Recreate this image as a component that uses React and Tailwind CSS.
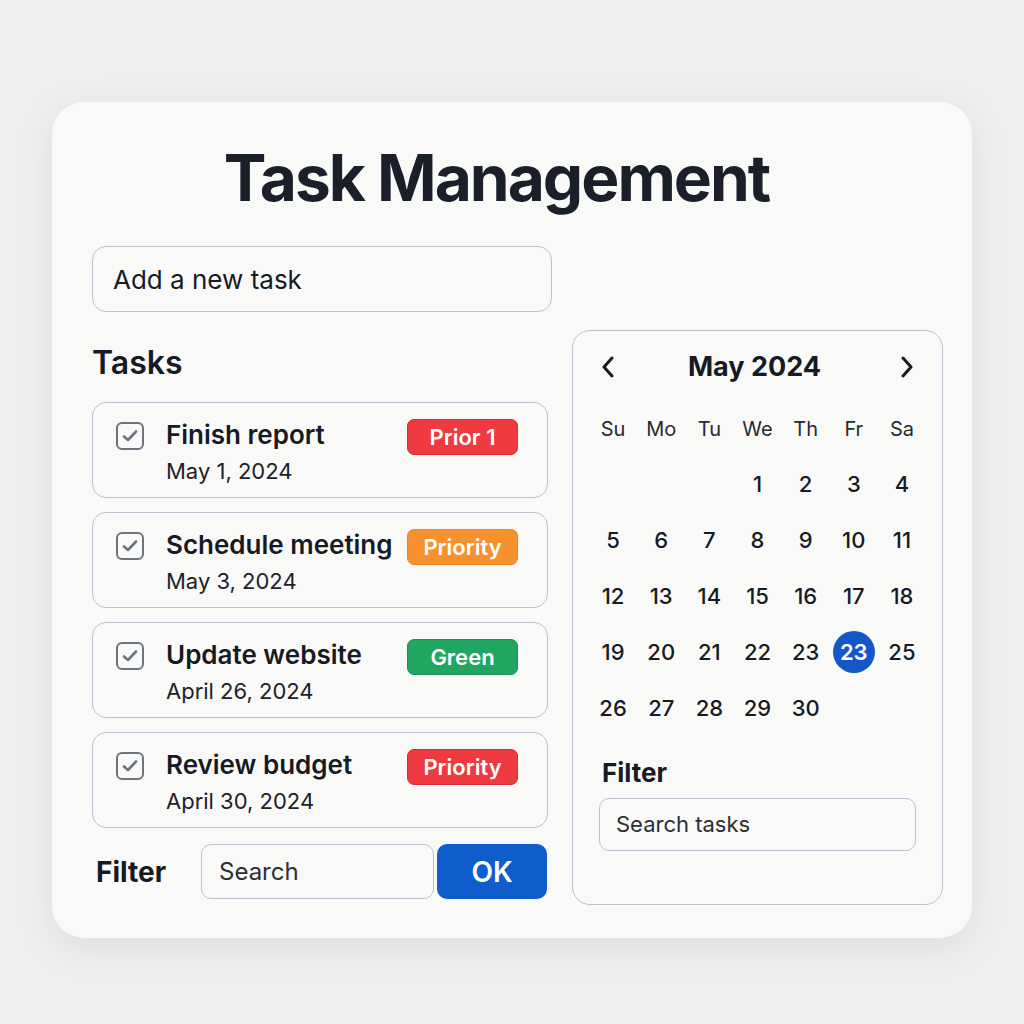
const TASKS = [
  { title: 'Finish report', date: 'May 1, 2024', badge: 'Prior 1', color: 'bg-[#ee3a40] border-[#e02a31]' },
  { title: 'Schedule meeting', date: 'May 3, 2024', badge: 'Priority', color: 'bg-[#f6912e] border-[#ec8420]' },
  { title: 'Update website', date: 'April 26, 2024', badge: 'Green', color: 'bg-[#21a662] border-[#179455]' },
  { title: 'Review budget', date: 'April 30, 2024', badge: 'Priority', color: 'bg-[#ee3a40] border-[#e02a31]' },
]

const DAYS = ['Su', 'Mo', 'Tu', 'We', 'Th', 'Fr', 'Sa']

// the reference repeats 23 on the Friday, keep it as shown
const WEEKS = [
  ['', '', '', '1', '2', '3', '4'],
  ['5', '6', '7', '8', '9', '10', '11'],
  ['12', '13', '14', '15', '16', '17', '18'],
  ['19', '20', '21', '22', '23', '23*', '25'],
  ['26', '27', '28', '29', '30', '', ''],
]

function Check() {
  return (
    <div className="mt-[3px] w-[28px] h-[28px] shrink-0 rounded-[6px] border-2 border-[#6e7480] flex items-center justify-center">
      <svg width="16" height="14" viewBox="0 0 16 14" fill="none">
        <path d="M2 7.5 6 11 14 2.5" stroke="#6e7480" strokeWidth="2.6" strokeLinecap="round" strokeLinejoin="round" />
      </svg>
    </div>
  )
}

function TaskCard({ task }) {
  return (
    <div className="h-[96px] rounded-[14px] border-[1.5px] border-[#bac2ce] pl-[23px] pr-[29px] pt-[16px] flex items-start">
      <Check />
      <div className="ml-[22px] flex-1 min-w-0">
        <div className="text-[26px] leading-[32px] font-semibold text-[#151a24] whitespace-nowrap">{task.title}</div>
        <div className="mt-[6px] text-[22px] leading-[28px] text-[#1d2129]">{task.date}</div>
      </div>
      <div className={`w-[111px] h-[36px] shrink-0 rounded-[7px] border ${task.color} text-white text-[22px] font-semibold flex items-center justify-center`}>
        {task.badge}
      </div>
    </div>
  )
}

function Chevron({ dir }) {
  return (
    <svg width="14" height="22" viewBox="0 0 14 22" fill="none">
      <path
        d={dir === 'left' ? 'M11 2 3 11l8 9' : 'M3 2l8 9-8 9'}
        stroke="#151a24"
        strokeWidth="3"
        strokeLinecap="round"
        strokeLinejoin="round"
      />
    </svg>
  )
}

function Calendar() {
  return (
    <div className="w-[371px] h-[575px] rounded-[18px] border-[1.5px] border-[#bac2ce] px-[16px] pt-[18px]">
      <div className="h-[36px] flex items-center justify-between px-[12px]">
        <Chevron dir="left" />
        <div className="text-[27px] leading-[36px] font-bold text-[#151a24] pr-[6px]">May 2024</div>
        <Chevron dir="right" />
      </div>
      <div className="mt-[29px] grid grid-cols-7 h-[30px] items-center">
        {DAYS.map(d => (
          <div key={d} className="text-center text-[20px] text-[#262a31]">{d}</div>
        ))}
      </div>
      <div className="mt-[12px]">
        {WEEKS.map((w, i) => (
          <div key={i} className="grid grid-cols-7 h-[56px] items-center">
            {w.map((n, j) => (
              <div key={j} className="flex items-center justify-center">
                {n.endsWith('*') ? (
                  <span className="w-[42px] h-[42px] rounded-full bg-[#1556c9] text-white text-[22px] font-semibold flex items-center justify-center">
                    {n.slice(0, -1)}
                  </span>
                ) : (
                  <span className="text-[22px] font-medium text-[#151a24]">{n}</span>
                )}
              </div>
            ))}
          </div>
        ))}
      </div>
      <div className="mt-[21px] px-[13px] text-[26px] leading-[32px] font-bold text-[#151a24]">Filter</div>
      <div className="mt-[9px] mx-[10px] h-[53px] rounded-[10px] border-[1.5px] border-[#bac2ce] flex items-center px-[16px] text-[22px] text-[#2a2f38]">
        Search tasks
      </div>
    </div>
  )
}

export default function App() {
  return (
    <div className="min-h-[1024px] bg-[#efefef] font-['Inter',sans-serif] pt-[102px]">
      <div className="ml-[52px] w-[920px] h-[836px] rounded-[32px] bg-[#f9f9f7] shadow-[0_10px_40px_rgba(0,0,0,0.08)] pl-[40px] pr-[29px] pt-[37px]">
        <h1 className="text-[64px] leading-[78px] font-bold text-center text-[#1a1f2a] tracking-[-2px] pr-[42px]">
          Task Management
        </h1>
        <div className="mt-[29px] flex items-start gap-[20px]">
          <div className="w-[460px] shrink-0">
            <div className="h-[66px] rounded-[14px] border-[1.5px] border-[#bac2ce] flex items-center px-[20px] text-[26px] text-[#151a24]">
              Add a new task
            </div>
            <div className="mt-[31px] mb-[19px] text-[32px] leading-[40px] font-semibold text-[#151a24]">Tasks</div>
            <div className="w-[456px] flex flex-col gap-[14px]">
              {TASKS.map(t => <TaskCard key={t.title} task={t} />)}
            </div>
            <div className="mt-[16px] flex items-center h-[55px]">
              <div className="ml-[4px] w-[105px] text-[28px] font-bold text-[#151a24]">Filter</div>
              <div className="w-[233px] h-[55px] rounded-[10px] border-[1.5px] border-[#bac2ce] flex items-center px-[17px] text-[24px] text-[#2a2f38]">
                Search
              </div>
              <div className="ml-[3px] w-[110px] h-[55px] rounded-[10px] bg-[#0f5ccc] text-white text-[28px] font-semibold flex items-center justify-center">
                OK
              </div>
            </div>
          </div>
          <div className="mt-[84px] shrink-0">
            <Calendar />
          </div>
        </div>
      </div>
    </div>
  )
}
